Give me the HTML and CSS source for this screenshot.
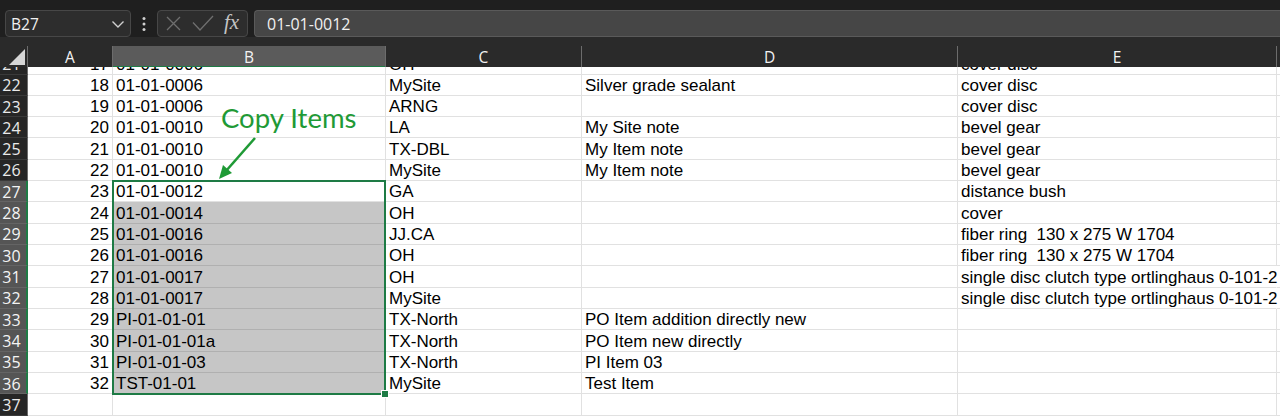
FILE: index.html
```html
<!DOCTYPE html>
<html>
<head>
<meta charset="utf-8">
<link rel="stylesheet" href="styles.css">
</head>
<body>
<div class="app">
  <div class="topstrip"></div>
  <div class="fbar">
    <div class="namebox">
      <span class="nb-text">B27</span>
      <svg class="chev" width="14" height="10" viewBox="0 0 14 10"><path d="M1.5 2.5 L7 8 L12.5 2.5" fill="none" stroke="#cfcfcf" stroke-width="1.4"/></svg>
    </div>
    <div class="dots">
      <svg width="6" height="16" viewBox="0 0 6 16"><circle cx="3" cy="2.5" r="1.5" fill="#d0d0d0"/><circle cx="3" cy="8" r="1.5" fill="#d0d0d0"/><circle cx="3" cy="13.5" r="1.5" fill="#d0d0d0"/></svg>
    </div>
    <div class="fxgroup">
      <svg class="ico-x" width="15" height="15" viewBox="0 0 15 15"><path d="M1 1 L14 14 M14 1 L1 14" stroke="#6f6f6f" stroke-width="1.3" fill="none"/></svg>
      <svg class="ico-check" width="22" height="17" viewBox="0 0 22 17"><path d="M1 7.5 L8 15 L21 1" stroke="#6f6f6f" stroke-width="1.3" fill="none"/></svg>
      <span class="fx">fx</span>
    </div>
    <div class="finput">01-01-0012</div>
  </div>
  <div class="gap"></div>
  <div class="colheads">
    <div class="ch corner"><svg width="18" height="18" viewBox="0 0 18 18"><path d="M17 1 L17 17 L1 17 Z" fill="#d6d6d6"/></svg></div>
    <div class="ch">A</div>
    <div class="ch sel">B</div>
    <div class="ch">C</div>
    <div class="ch">D</div>
    <div class="ch">E</div>
    <div class="ch last"></div>
  </div>
  <div class="viewport">
    <div class="stack">
    <div class="grid">
      <div class="rh">21</div><div class="c num">17</div><div class="c">01-01-0006</div><div class="c">OH</div><div class="c"></div><div class="c">cover disc</div><div class="c f"></div>
      <div class="rh">22</div><div class="c num">18</div><div class="c">01-01-0006</div><div class="c">MySite</div><div class="c">Silver grade sealant</div><div class="c">cover disc</div><div class="c f"></div>
      <div class="rh">23</div><div class="c num">19</div><div class="c">01-01-0006</div><div class="c">ARNG</div><div class="c"></div><div class="c">cover disc</div><div class="c f"></div>
      <div class="rh">24</div><div class="c num">20</div><div class="c">01-01-0010</div><div class="c">LA</div><div class="c">My Site note</div><div class="c">bevel gear</div><div class="c f"></div>
      <div class="rh">25</div><div class="c num">21</div><div class="c">01-01-0010</div><div class="c">TX-DBL</div><div class="c">My Item note</div><div class="c">bevel gear</div><div class="c f"></div>
      <div class="rh">26</div><div class="c num">22</div><div class="c">01-01-0010</div><div class="c">MySite</div><div class="c">My Item note</div><div class="c">bevel gear</div><div class="c f"></div>
      <div class="rh rsel">27</div><div class="c num">23</div><div class="c">01-01-0012</div><div class="c">GA</div><div class="c"></div><div class="c">distance bush</div><div class="c f"></div>
      <div class="rh rsel">28</div><div class="c num">24</div><div class="c hl">01-01-0014</div><div class="c">OH</div><div class="c"></div><div class="c">cover</div><div class="c f"></div>
      <div class="rh rsel">29</div><div class="c num">25</div><div class="c hl">01-01-0016</div><div class="c">JJ.CA</div><div class="c"></div><div class="c">fiber ring&nbsp; 130 x 275 W 1704</div><div class="c f"></div>
      <div class="rh rsel">30</div><div class="c num">26</div><div class="c hl">01-01-0016</div><div class="c">OH</div><div class="c"></div><div class="c">fiber ring&nbsp; 130 x 275 W 1704</div><div class="c f"></div>
      <div class="rh rsel">31</div><div class="c num">27</div><div class="c hl">01-01-0017</div><div class="c">OH</div><div class="c"></div><div class="c ov">single disc clutch type ortlinghaus 0-101-2</div><div class="c f"></div>
      <div class="rh rsel">32</div><div class="c num">28</div><div class="c hl">01-01-0017</div><div class="c">MySite</div><div class="c"></div><div class="c ov">single disc clutch type ortlinghaus 0-101-2</div><div class="c f"></div>
      <div class="rh rsel">33</div><div class="c num">29</div><div class="c hl">PI-01-01-01</div><div class="c">TX-North</div><div class="c">PO Item addition directly new</div><div class="c"></div><div class="c f"></div>
      <div class="rh rsel">34</div><div class="c num">30</div><div class="c hl">PI-01-01-01a</div><div class="c">TX-North</div><div class="c">PO Item new directly</div><div class="c"></div><div class="c f"></div>
      <div class="rh rsel">35</div><div class="c num">31</div><div class="c hl">PI-01-01-03</div><div class="c">TX-North</div><div class="c">PI Item 03</div><div class="c"></div><div class="c f"></div>
      <div class="rh rsel">36</div><div class="c num">32</div><div class="c hl">TST-01-01</div><div class="c">MySite</div><div class="c">Test Item</div><div class="c"></div><div class="c f"></div>
      <div class="rh">37</div><div class="c num"></div><div class="c"></div><div class="c"></div><div class="c"></div><div class="c"></div><div class="c f"></div>
    </div>
    <div class="overlay">
      <div class="selbox"><span class="handle"></span></div>
    </div>
    </div>
    <div class="note">
      <span class="note-text">Copy Items</span>
      <svg class="note-arrow" width="44" height="46" viewBox="0 0 44 46"><path d="M38 2 L9 35" stroke="#1f9a36" stroke-width="2.6" fill="none"/><path d="M2 43 L6 29 L15 37 Z" fill="#1f9a36"/></svg>
    </div>
  </div>
</div>
</body>
</html>
```

FILE: styles.css
```css
html, body {
  margin: 0;
  padding: 0;
}
body {
  width: 1280px;
  height: 416px;
  overflow: hidden;
  background: #2a2a2a;
}
.app {
  width: 1280px;
  height: 416px;
  display: flex;
  flex-direction: column;
  overflow: hidden;
}
.topstrip {
  height: 10px;
  background: #1f1f1f;
  flex: none;
}
.fbar {
  height: 27px;
  flex: none;
  display: flex;
  padding-left: 5px;
  background: #1f1f1f;
  font-family: "Open Sans", "Noto Sans", sans-serif;
  color: #f0f0f0;
}
.namebox {
  width: 126px;
  box-sizing: border-box;
  border: 1px solid #474747;
  border-radius: 4px;
  background: #2d2d2d;
  display: flex;
  align-items: center;
  justify-content: space-between;
  padding: 0 5px 0 5px;
}
.nb-text {
  font-size: 15.5px;
}
.chev {
  display: block;
}
.dots {
  width: 26px;
  display: flex;
  align-items: center;
  justify-content: center;
}
.dots svg { display: block; }
.fxgroup {
  width: 91px;
  box-sizing: border-box;
  border: 1px solid #474747;
  border-radius: 4px;
  background: #2d2d2d;
  display: flex;
  align-items: center;
  padding-left: 8px;
}
.ico-x { display: block; margin-right: 11px; }
.ico-check { display: block; margin-right: 10px; }
.fx {
  font-family: "Liberation Serif", "DejaVu Serif", serif;
  font-style: italic;
  font-size: 21px;
  color: #c4c4c4;
  line-height: 1;
  margin-top: -3px;
}
.finput {
  flex: 1;
  margin-left: 6px;
  box-sizing: border-box;
  border: 1px solid #5a5a5a;
  border-right: none;
  border-radius: 4px 0 0 4px;
  background: #464646;
  font-size: 16px;
  display: flex;
  align-items: center;
  padding-left: 12px;
}
.gap {
  height: 9px;
  flex: none;
}
.colheads {
  height: 21px;
  flex: none;
  display: grid;
  grid-template-columns: 28px 85px 273px 196px 376px 319px 1fr;
  background: #2a2a2a;
  font-family: "Open Sans", "Noto Sans", sans-serif;
  font-size: 15.5px;
  color: #f2f2f2;
}
.ch {
  box-sizing: border-box;
  border-right: 1px solid #6c6c6c;
  display: flex;
  align-items: center;
  justify-content: center;
  line-height: 1;
  padding-top: 2px;
}
.ch.corner {
  justify-content: flex-end;
  align-items: flex-end;
  padding: 0 1px 2px 0;
  border-right: 1px solid #6c6c6c;
}
.ch.corner svg { display: block; }
.ch.sel {
  background: #5b5b5b;
  border-bottom: 2px solid #1e7b45;
  padding-top: 4px;
}
.ch.last { border-right: none; }
.viewport {
  flex: 1;
  position: relative;
  overflow: hidden;
  background: #ffffff;
}
.stack {
  display: grid;
  margin-top: -13.83px;
}
.stack > .grid,
.stack > .overlay {
  grid-area: 1 / 1;
}
.grid,
.overlay {
  display: grid;
  grid-template-columns: 28px 85px 273px 196px 376px 319px 1fr;
  grid-template-rows: repeat(17, 21.33px);
}
.overlay {
  pointer-events: none;
  z-index: 2;
}
.rh {
  box-sizing: border-box;
  background: #262626;
  color: #eaeaea;
  font-family: "Open Sans", "Noto Sans", sans-serif;
  font-size: 16px;
  display: flex;
  align-items: center;
  justify-content: center;
  padding: 1px 4px 0 0;
  border-bottom: 1px solid #3a3a3a;
  border-right: 1px solid #6c6c6c;
}
.rh.rsel {
  background: #555555;
  color: #f4f4f4;
  border-right: 2px solid #1e7b45;
  padding-right: 3px;
  border-bottom-color: #646464;
}
.c {
  box-sizing: border-box;
  border-right: 1px solid #e1e1e1;
  border-bottom: 1px solid #e1e1e1;
  font-family: "Liberation Sans", Arial, sans-serif;
  font-size: 17px;
  line-height: 18px;
  color: #000;
  display: flex;
  align-items: flex-end;
  padding: 0 3px 0 3px;
  white-space: nowrap;
  overflow: hidden;
}
.c.num {
  justify-content: flex-end;
  padding-right: 3px;
}
.c.hl {
  background: #c6c6c6;
  border-bottom-color: #b0b0b0;
  border-right-color: #b0b0b0;
}
.c.ov {
  overflow: visible;
  border-right-color: transparent;
  position: relative;
  z-index: 1;
}
.c.f {
  border-right: none;
}
.selbox {
  grid-column: 3;
  grid-row: 7 / 17;
  margin: -1px 0 -1px -1px;
  border: 2px solid #1e7b45;
  position: relative;
}
.handle {
  position: absolute;
  right: -5px;
  bottom: -5px;
  width: 6px;
  height: 6px;
  background: #1e7b45;
  border: 1px solid #ffffff;
}
.note {
  position: absolute;
  left: 214px;
  top: 35px;
  z-index: 3;
  pointer-events: none;
}
.note-text {
  display: block;
  font-family: Lato, "Open Sans", sans-serif;
  font-size: 27.5px;
  color: #1f9a36;
  margin-left: 7px;
  line-height: 32px;
}
.note-arrow {
  display: block;
  margin-left: 3px;
  margin-top: 2px;
}
```
